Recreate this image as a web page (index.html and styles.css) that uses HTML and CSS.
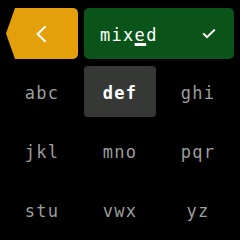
FILE: index.html
```html
<!DOCTYPE html>
<html>
<head>
<meta charset="utf-8">
<link rel="stylesheet" href="styles.css">
</head>
<body>
<div class="screen">
  <div class="top">
    <div class="back">
      <svg class="chev" width="16" height="16" viewBox="0 0 16 16"><path d="M12 0.8 L4.6 8 L12 15.2" fill="none" stroke="#fff" stroke-width="2" stroke-linecap="square"/></svg>
    </div>
    <div class="entry">
      <span class="word">mix<span class="cursor">e</span>d</span>
      <svg class="check" width="14" height="10" viewBox="0 0 14 10"><path d="M1.2 4.4 L5 8.2 L12.8 0.6" fill="none" stroke="#fff" stroke-width="2"/></svg>
    </div>
  </div>
  <div class="grid">
    <div class="key">abc</div>
    <div class="key sel">def</div>
    <div class="key">ghi</div>
    <div class="key">jkl</div>
    <div class="key">mno</div>
    <div class="key">pqr</div>
    <div class="key">stu</div>
    <div class="key">vwx</div>
    <div class="key">yz</div>
  </div>
</div>
</body>
</html>
```
FILE: styles.css
```css
html, body {
  margin: 0;
  padding: 0;
  background: #000;
}
.screen {
  width: 240px;
  height: 240px;
  box-sizing: border-box;
  padding: 8px 6px 5px 6px;
  display: flex;
  flex-direction: column;
  gap: 7px;
  font-family: "DejaVu Sans Mono", monospace;
  font-size: 17px;
  letter-spacing: 1.3px;
}
.top {
  display: flex;
  gap: 6px;
  height: 51px;
}
.back {
  width: 72px;
  background: #e3a00a;
  border-radius: 0 5px 5px 0;
  clip-path: polygon(9px 0, 100% 0, 100% 100%, 9px 100%, 0 50%);
  display: flex;
  align-items: center;
  justify-content: center;
  padding-right: 2px;
  box-sizing: border-box;
}
.chev {
  display: block;
  margin-top: 1px;
}
.entry {
  flex: 1;
  background: #0b5419;
  border-radius: 5px;
  display: flex;
  align-items: center;
  justify-content: space-between;
  padding: 0 18px 0 16px;
  color: #fff;
}
.word {
  padding-top: 3px;
}
.cursor {
  text-decoration: underline;
  text-decoration-thickness: 2.5px;
  text-underline-offset: 2px;
}
.check {
  display: block;
  margin-top: 1px;
}
.grid {
  display: grid;
  grid-template-columns: repeat(3, 72px);
  grid-auto-rows: 51px;
  column-gap: 6px;
  row-gap: 8px;
}
.key {
  display: flex;
  align-items: center;
  justify-content: center;
  color: #9c9c9c;
  padding-top: 3px;
  box-sizing: border-box;
  border-radius: 4px;
}
.key.sel {
  background: #353835;
  color: #fff;
  font-weight: bold;
}
```
